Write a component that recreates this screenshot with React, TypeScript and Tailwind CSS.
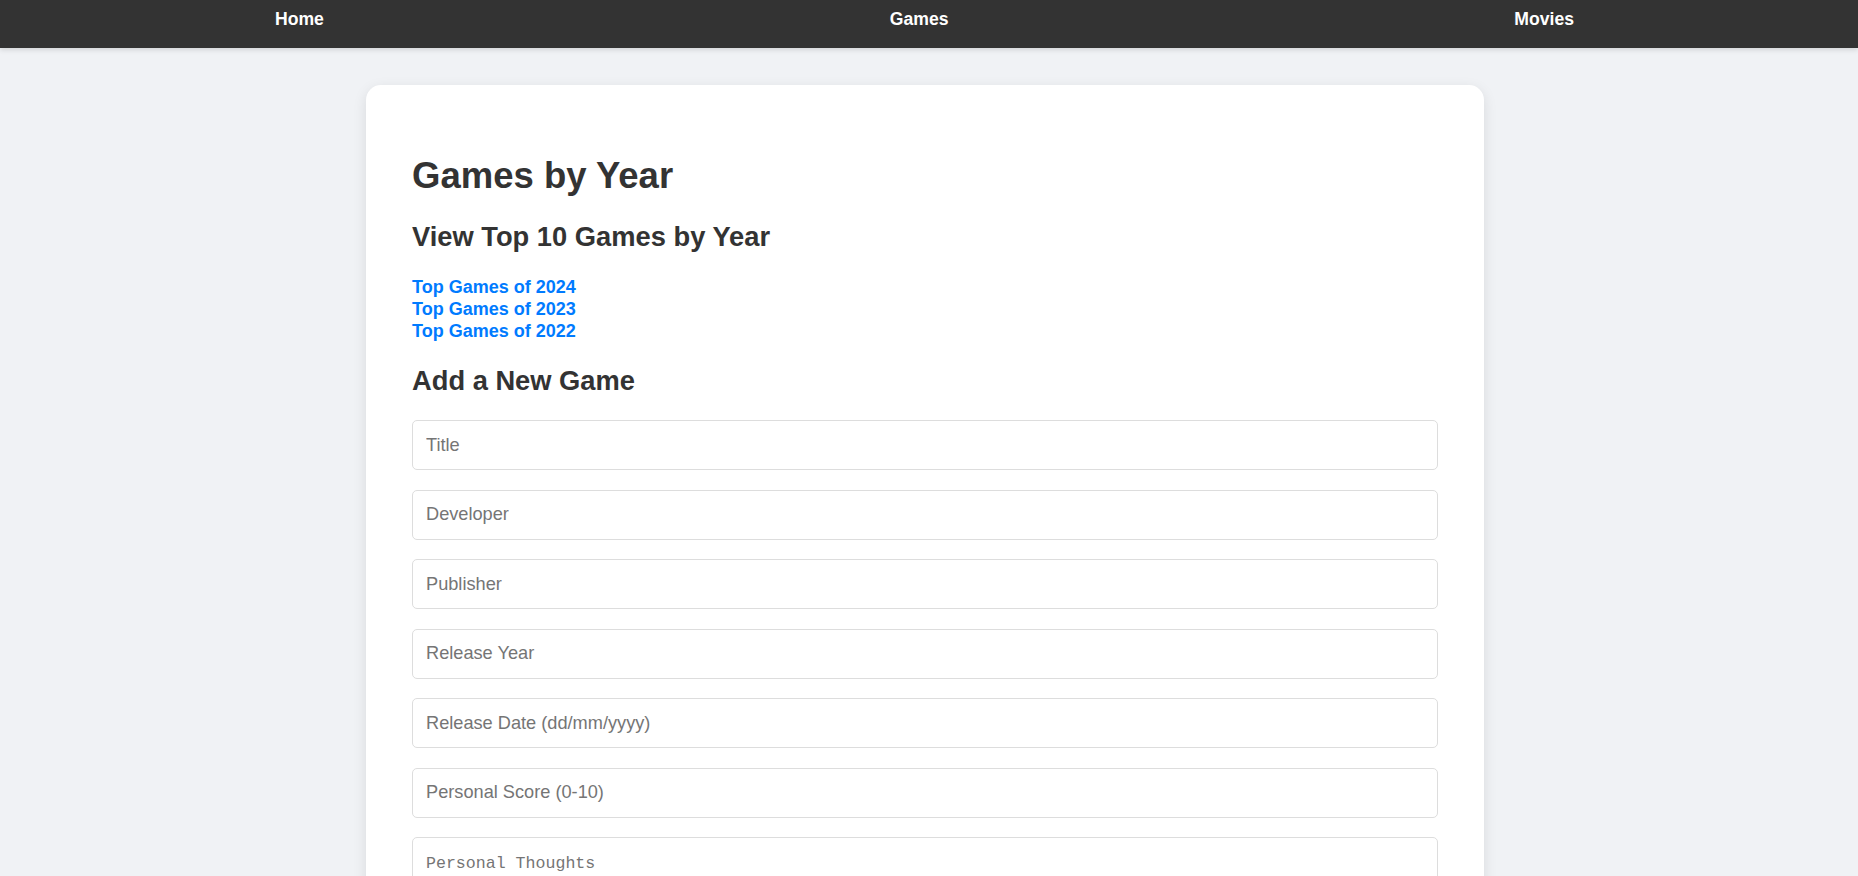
import React from "react";

const fields = [
  "Title",
  "Developer",
  "Publisher",
  "Release Year",
  "Release Date (dd/mm/yyyy)",
  "Personal Score (0-10)",
];

const years = [2024, 2023, 2022];

const App = () => {
  return (
    <div className="min-h-screen bg-[#f0f2f5] font-['Liberation_Sans',Arial,sans-serif] text-[#333]">
      {/* Top navigation */}
      <nav className="relative z-10 h-[48px] bg-[#333] shadow-[0_2px_5px_rgba(0,0,0,0.12)] flex items-start justify-between pl-[275px] pr-[284px] pt-[9px]">
        <a href="#" className="text-white font-bold text-[17.6px] leading-[20px]">Home</a>
        <a href="#" className="text-white font-bold text-[17.6px] leading-[20px]">Games</a>
        <a href="#" className="text-white font-bold text-[17.6px] leading-[20px]">Movies</a>
      </nav>

      {/* Card */}
      <main className="pt-[37px] pb-10 pr-[8px]">
        <div className="mx-auto w-[1118px] rounded-[15px] bg-white shadow-[0_4px_14px_rgba(0,0,0,0.1)] px-[46px] pt-[71px] pb-12">
          <h1 className="text-[36.5px] leading-[40px] font-bold">Games by Year</h1>
          <h2 className="mt-[25.6px] text-[27.3px] leading-[30px] font-bold">View Top 10 Games by Year</h2>

          <div className="mt-[25.5px] flex flex-col items-start">
            {years.map((y) => (
              <a key={y} href="#" className="text-[#007bff] font-bold text-[18px] leading-[21.7px]">
                Top Games of {y}
              </a>
            ))}
          </div>

          <h2 className="mt-[23.3px] text-[27.3px] leading-[30px] font-bold">Add a New Game</h2>

          <form className="mt-[24.6px] flex flex-col gap-[19.5px]">
            {fields.map((f) => (
              <input
                key={f}
                type="text"
                placeholder={f}
                className="h-[50px] w-full rounded-[5px] border border-[#ddd] bg-white px-[13px] text-[18.2px] placeholder:text-[#757575] outline-none"
              />
            ))}
            <textarea
              placeholder="Personal Thoughts"
              className="h-[120px] w-full rounded-[5px] border border-[#ddd] bg-white px-[13px] pt-[16px] pb-[13px] font-['Liberation_Mono',monospace] text-[16.6px] leading-[19px] placeholder:text-[#757575] outline-none resize-y"
            />
          </form>
        </div>
      </main>
    </div>
  );
};

export default App;
